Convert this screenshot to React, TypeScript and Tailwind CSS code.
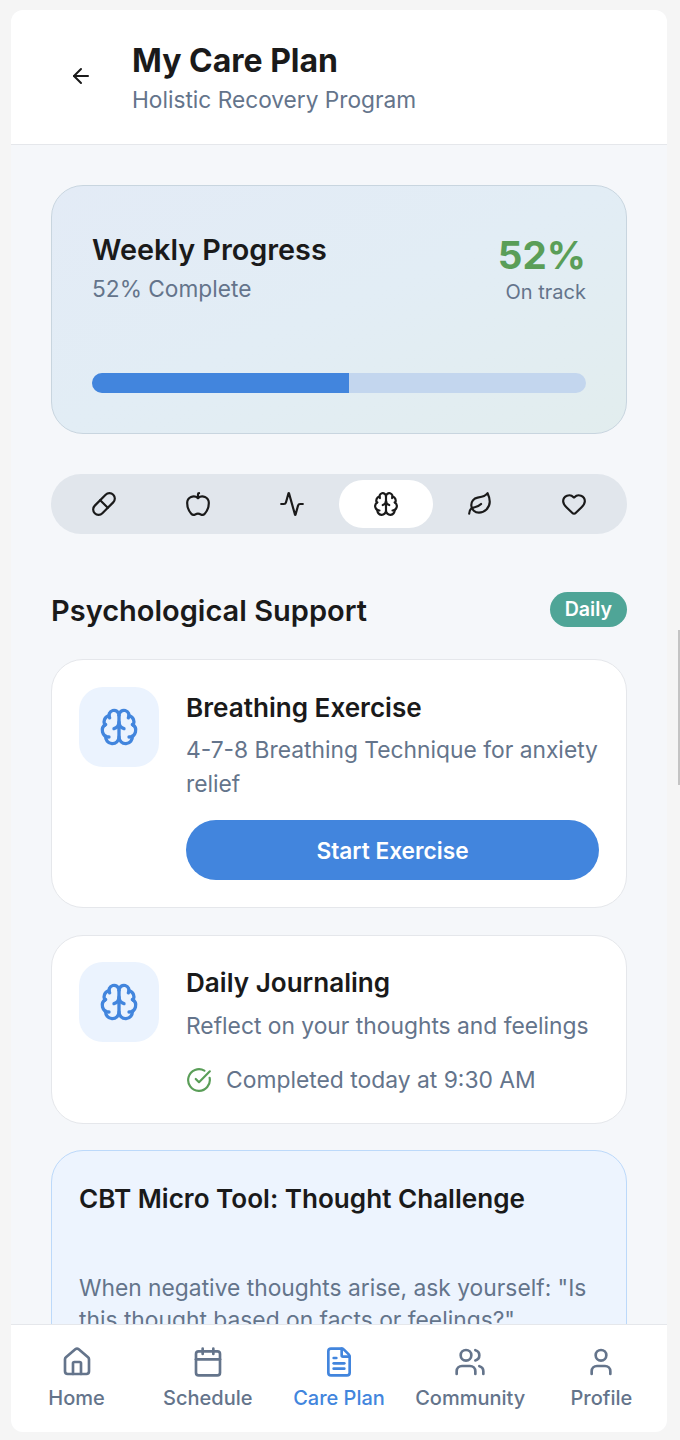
import { Activity, Apple, ArrowLeft, Brain, Calendar, CircleCheckBig, FileText, Heart, House, Leaf, Pill, User, Users } from "lucide-react";

const TABS = [
  { icon: Pill, active: false },
  { icon: Apple, active: false },
  { icon: Activity, active: false },
  { icon: Brain, active: true },
  { icon: Leaf, active: false },
  { icon: Heart, active: false },
];

const NAV = [
  { icon: House, label: "Home", active: false },
  { icon: Calendar, label: "Schedule", active: false },
  { icon: FileText, label: "Care Plan", active: true },
  { icon: Users, label: "Community", active: false },
  { icon: User, label: "Profile", active: false },
];

export default function App() {
  return (
    <div className="relative h-[1440px] overflow-hidden bg-[#f5f5f5] pt-[10px] pl-[11px] pr-[13px] pb-[8px] font-['Inter',sans-serif]">
      {/* scrollbar thumb */}
      <div className="absolute right-0 top-[630px] h-[155px] w-[2px] bg-[#c4c4c4]" />

      <div className="flex h-full flex-col overflow-hidden rounded-[12px] bg-[#f5f7fa]">
        {/* Header */}
        <header className="flex h-[135px] shrink-0 items-center border-b border-[#e5e7eb] bg-white pt-[2px] pl-[58px]">
          <ArrowLeft size={24} strokeWidth={2} className="mr-[39px] mt-[-4px] text-[#1a1a1a]" />
          <div className="flex flex-col">
            <h1 className="text-[32px] leading-[40px] font-bold text-[#1a1a1a]">My Care Plan</h1>
            <p className="mt-[4px] text-[22.7px] leading-[30px] text-[#64748b]">Holistic Recovery Program</p>
          </div>
        </header>

        {/* Scrolling content */}
        <main className="min-h-0 flex-1 overflow-hidden px-[40px] pt-[40px]">
          {/* Weekly progress */}
          <section className="h-[249px] rounded-[32px] border border-[#c8d5df] bg-gradient-to-br from-[#e3ebf6] via-[#e2edf5] to-[#e2edee] px-[40px] pt-[41px]">
            <div className="flex items-start justify-between">
              <div>
                <h2 className="text-[28.8px] leading-[46px] font-semibold text-[#1a1a1a]">Weekly Progress</h2>
                <p className="text-[22.7px] leading-[32px] text-[#64748b]">52% Complete</p>
              </div>
              <div className="flex flex-col items-end">
                <span className="text-[38.6px] leading-[56px] font-bold text-[#5a9e58]">52%</span>
                <span className="mt-[-5px] text-[20px] leading-[28px] text-[#64748b]">On track</span>
              </div>
            </div>
            <div className="mt-[67px] h-[20px] overflow-hidden rounded-full bg-[#c3d6ee]">
              <div className="h-full w-[52%] bg-[#4285dd]" />
            </div>
          </section>

          {/* Category tabs */}
          <nav className="mt-[40px] grid h-[60px] grid-cols-6 items-center rounded-[30px] bg-[#e1e6ec] px-[6px]">
            {TABS.map(({ icon: Icon, active }, i) => (
              <div
                key={i}
                className={`flex h-[48px] items-center justify-center rounded-[24px] pb-[1px] text-[#1a1a1a] ${active ? "bg-white" : ""}`}
              >
                <Icon size={26} strokeWidth={2} />
              </div>
            ))}
          </nav>

          {/* Section title */}
          <div className="mt-[58px] flex items-start justify-between">
            <h2 className="text-[29px] leading-[38px] font-semibold text-[#1a1a1a]">Psychological Support</h2>
            <span className="rounded-full bg-[#4fa597] px-[15px] text-[19.6px] leading-[35px] font-semibold text-white">Daily</span>
          </div>

          {/* Breathing */}
          <article className="mt-[29px] flex h-[249px] gap-[27px] rounded-[32px] border border-[#e5e7eb] bg-white pl-[27px] pr-[27px] pt-[27px]">
            <div className="flex h-[80px] w-[80px] shrink-0 items-center justify-center rounded-[24px] bg-[#ebf3fe] text-[#4285dd]">
              <Brain size={40} strokeWidth={2} />
            </div>
            <div className="min-w-0 flex-1">
              <h3 className="text-[26.1px] leading-[42px] font-semibold text-[#1a1a1a]">Breathing Exercise</h3>
              <p className="mt-[4px] text-[22.8px] leading-[34px] text-[#64748b]">4-7-8 Breathing Technique for anxiety relief</p>
              <button className="mt-[19px] h-[60px] w-full rounded-full bg-[#4285dd] pt-[2px] text-[22.7px] font-semibold text-white">Start Exercise</button>
            </div>
          </article>

          {/* Journaling */}
          <article className="mt-[27px] flex h-[189px] gap-[27px] rounded-[32px] border border-[#e5e7eb] bg-white pl-[27px] pr-[27px] pt-[26px]">
            <div className="flex h-[80px] w-[80px] shrink-0 items-center justify-center rounded-[24px] bg-[#ebf3fe] text-[#4285dd]">
              <Brain size={40} strokeWidth={2} />
            </div>
            <div className="min-w-0 flex-1">
              <h3 className="text-[26.1px] leading-[42px] font-semibold text-[#1a1a1a]">Daily Journaling</h3>
              <p className="mt-[4px] text-[22.8px] leading-[35px] text-[#64748b]">Reflect on your thoughts and feelings</p>
              <div className="mt-[19px] flex items-center gap-[14px] text-[#64748b]">
                <CircleCheckBig size={26} strokeWidth={2} className="text-[#5a9e58]" />
                <span className="text-[22.85px] leading-[36px]">Completed today at 9:30 AM</span>
              </div>
            </div>
          </article>

          {/* CBT tool */}
          <article className="mt-[26px] h-[260px] rounded-[32px] border border-[#bcd9fa] bg-[#edf4fe] px-[27px] pt-[27px]">
            <h3 className="text-[26.1px] leading-[42px] font-semibold text-[#1a1a1a]">CBT Micro Tool: Thought Challenge</h3>
            <p className="mt-[52px] text-[22.8px] leading-[32px] text-[#64748b]">When negative thoughts arise, ask yourself: "Is this thought based on facts or feelings?"</p>
          </article>
        </main>

        {/* Bottom nav */}
        <footer className="grid h-[108px] shrink-0 grid-cols-5 border-t border-[#e5e7eb] bg-white pt-[21px]">
          {NAV.map(({ icon: Icon, label, active }) => (
            <div key={label} className={`flex flex-col items-center ${active ? "text-[#4285dd]" : "text-[#64748b]"}`}>
              <Icon size={32} strokeWidth={2} />
              <span className="mt-[6px] text-[20px] leading-[28px] font-medium">{label}</span>
            </div>
          ))}
        </footer>
      </div>
    </div>
  );
}
